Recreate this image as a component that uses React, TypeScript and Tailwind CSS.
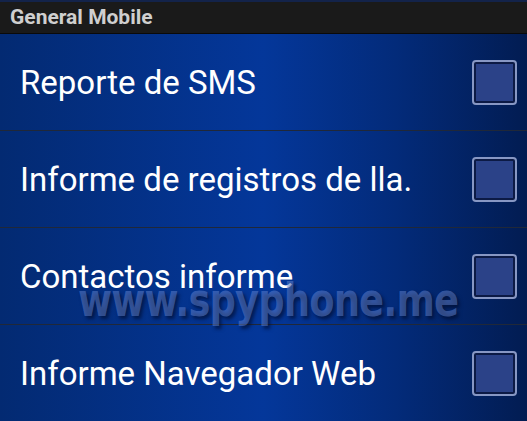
const items = [
  'Reporte de SMS',
  'Informe de registros de lla.',
  'Contactos informe',
  'Informe Navegador Web',
];

function Checkbox() {
  return (
    <div className="h-[45px] w-[45px] rounded-[4px] border-[2px] border-[#8797c4] bg-[#0c1a45] p-[2px]">
      <div className="h-full w-full bg-[#2b4288]" />
    </div>
  );
}

export default function App() {
  return (
    <div className="relative h-[421px] w-[527px] overflow-hidden font-['Roboto',sans-serif]">
      <div className="h-[2px] bg-[#13234a]" />
      <div className="flex h-[31px] items-center bg-[#1a1a1a] pl-[10px] text-[21px] font-bold text-[#cfcfcf]">
        General Mobile
      </div>
      <div className="h-[1px] bg-[#0a0a0a]" />
      <div className="bg-[linear-gradient(to_right,#032a72_0%,#04379a_50%,#032b7a_75%,#021c52_100%)]">
        {items.map((label, i) => (
          <div key={label}>
            <div className="flex h-[96px] items-center justify-between pl-[20px] pr-[10px]">
              <span className="text-[33px] leading-none text-white">{label}</span>
              <Checkbox />
            </div>
            {i < items.length - 1 && <div className="h-[1px] bg-[#202838]" />}
          </div>
        ))}
      </div>
      <div className="pointer-events-none absolute left-[78px] top-[277px] origin-left scale-x-[0.8] whitespace-nowrap font-['DejaVu_Sans',sans-serif] text-[46px] font-bold leading-none tracking-[-1px] text-[#7090dc]/45 [text-shadow:3px_3px_4px_rgba(0,10,40,0.6)]">
        www.spyphone.me
      </div>
    </div>
  );
}
